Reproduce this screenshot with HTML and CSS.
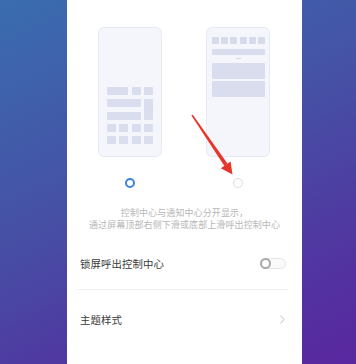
FILE: index.html
```html
<!DOCTYPE html>
<html lang="zh">
<head>
<meta charset="utf-8">
<title>控制中心</title>
<link rel="stylesheet" href="styles.css">
</head>
<body>
<div class="panel">
  <div class="options">
    <div class="option">
      <div class="phone phone-a">
        <div class="grid">
          <span class="t c12"></span><span class="t"></span><span class="t"></span>
          <span class="t c13"></span><span class="t tall"></span>
          <span class="t c13"></span>
          <span class="t"></span><span class="t"></span><span class="t"></span><span class="t"></span>
          <span class="t"></span><span class="t"></span><span class="t"></span><span class="t"></span>
        </div>
      </div>
      <span class="radio on"></span>
    </div>
    <div class="option">
      <div class="phone phone-b">
        <div class="squares">
          <span></span><span></span><span></span><span></span><span></span><span></span>
        </div>
        <div class="bar"></div>
        <div class="dash"></div>
        <div class="block"></div>
        <div class="block"></div>
      </div>
      <span class="radio"></span>
    </div>
  </div>
  <p class="desc">控制中心与通知中心分开显示，<br>通过屏幕顶部右侧下滑或底部上滑呼出控制中心</p>
  <div class="list">
    <div class="row row-first">
      <span class="label">锁屏呼出控制中心</span>
      <span class="toggle"><span class="knob"></span></span>
    </div>
    <div class="row row-second">
      <span class="label">主题样式</span>
      <svg class="chev" width="5" height="9" viewBox="0 0 5 9"><polyline points="0.8,0.8 4.2,4.5 0.8,8.2" fill="none" stroke="#cfcfcf" stroke-width="1.1" stroke-linecap="round" stroke-linejoin="round"/></svg>
    </div>
  </div>
  <svg class="arrow" width="235" height="364" viewBox="0 0 235 364">
    <polygon points="124.4,115.4 125.8,114.8 160.6,163.8 157.4,166.0" fill="#e8352c"/>
    <polygon points="165.5,174.5 153.8,168.2 163.6,161.4" fill="#e8352c"/>
  </svg>
</div>
</body>
</html>
```

FILE: styles.css
```css
html, body {
  margin: 0;
  padding: 0;
}
body {
  width: 356px;
  height: 364px;
  overflow: hidden;
  background: linear-gradient(155deg, #3a6db0 0%, #4650a5 45%, #5233a0 80%, #5a27a0 100%);
  font-family: "Noto Sans CJK SC", "Noto Sans", sans-serif;
}
.panel {
  position: relative;
  width: 235px;
  height: 364px;
  margin-left: 67px;
  background: #ffffff;
}
.options {
  display: flex;
  gap: 44px;
  padding: 27px 0 0 31px;
}
.option {
  display: flex;
  flex-direction: column;
  align-items: center;
  width: 64px;
}
.phone {
  box-sizing: border-box;
  width: 64px;
  height: 130px;
  border: 1px solid #e7eaf4;
  border-radius: 6px;
  background: #f4f6fc;
}
.phone-a {
  display: flex;
  flex-direction: column;
  justify-content: flex-end;
  padding: 0 0 12px 8px;
}
.grid {
  display: grid;
  grid-template-columns: repeat(4, 9px);
  grid-template-rows: repeat(5, 8px);
  column-gap: 3.4px;
  row-gap: 4.2px;
}
.t {
  background: #d9ddee;
  border-radius: 1px;
}
.c12 { grid-column: 1 / span 2; }
.c13 { grid-column: 1 / span 3; }
.tall { grid-column: 4; grid-row: 2 / span 2; }
.phone-b {
  display: flex;
  flex-direction: column;
  padding: 9px 4px 0 5px;
}
.squares {
  display: flex;
  justify-content: space-between;
  height: 7px;
}
.squares span {
  width: 7px;
  height: 7px;
  background: #d6dbec;
  border-radius: 1px;
}
.bar {
  height: 6px;
  margin-top: 5px;
  background: #d9ddee;
  border-radius: 1px;
}
.dash {
  align-self: center;
  width: 5px;
  height: 1px;
  margin-top: 3px;
  background: #d3d7e6;
}
.block {
  height: 16px;
  margin-top: 4px;
  background: #d9ddee;
  border-radius: 1px;
}
.block + .block {
  margin-top: 2px;
}
.radio {
  box-sizing: border-box;
  width: 10px;
  height: 10px;
  margin-top: 21px;
  border-radius: 50%;
  border: 1.5px solid #dcdcdc;
}
.radio.on {
  border: 2px solid #3f82e2;
}
.desc {
  margin: 19px 0 0;
  text-align: center;
  font-size: 9px;
  line-height: 12px;
  color: #b7b7b7;
  letter-spacing: 0.1px;
}
.list {
  margin-top: 7px;
  padding: 0 14px 0 10px;
}
.row {
  display: flex;
  align-items: center;
  justify-content: space-between;
  padding: 0 2px 0 3px;
}
.row-first {
  height: 51px;
  border-bottom: 1px solid #f1f1f1;
}
.row-second {
  height: 58px;
}
.label {
  font-size: 10.4px;
  color: #3a3a3a;
  letter-spacing: 0.1px;
}
.toggle {
  box-sizing: border-box;
  display: flex;
  align-items: center;
  width: 26px;
  height: 11px;
  border: 1px solid #e4e4e4;
  border-radius: 6px;
  background: #fafafa;
}
.knob {
  box-sizing: border-box;
  width: 11px;
  height: 11px;
  margin-left: -1px;
  border: 2px solid #a8a8a8;
  border-radius: 50%;
  background: #ffffff;
}
.chev {
  display: block;
  margin-right: 1px;
}
.arrow {
  position: absolute;
  left: 0;
  top: 0;
  pointer-events: none;
}
```
